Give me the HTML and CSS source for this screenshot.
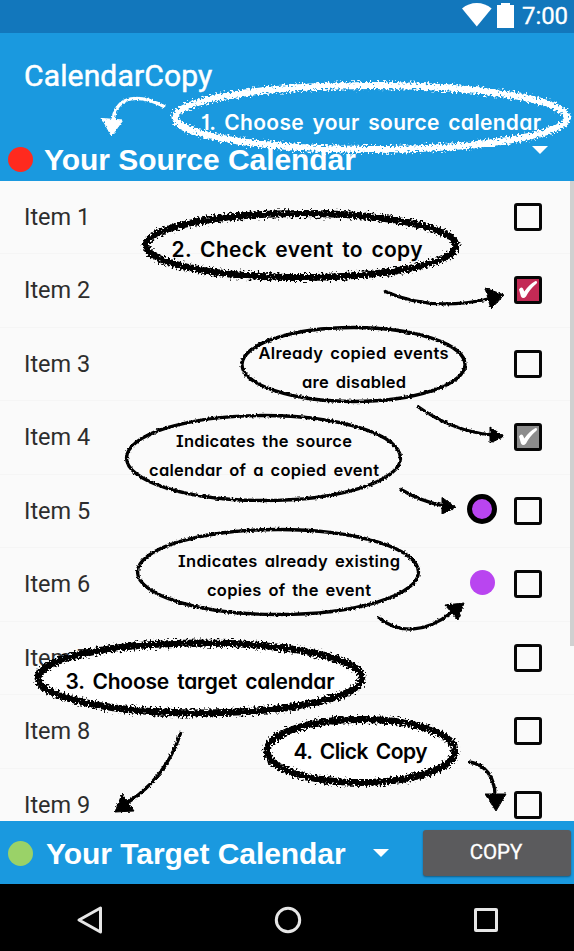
FILE: index.html
```html
<!DOCTYPE html>
<html lang="en">
<head>
<meta charset="utf-8">
<title>CalendarCopy</title>
<link rel="stylesheet" href="styles.css">
</head>
<body>
<div class="screen">
  <div class="status">
    <svg class="wifi" width="30" height="24" viewBox="0 0 30 24"><path d="M0 5.500Q6.500 0 14.800 0T29.600 5.500L14.800 23.500Z"/></svg>
    <svg class="battery" width="17" height="25" viewBox="0 0 17 25"><path d="M4 0h9v2h4v23H0V2h4z"/></svg>
    <span class="clock">7:00</span>
  </div>
  <header class="header">
    <h1 class="title">CalendarCopy</h1>
    <div class="source">
      <span class="dot red"></span>
      <span class="calendar">Your Source Calendar</span>
      <svg class="caret" width="16" height="8" viewBox="0 0 16 8"><path d="M0 0h16L8 8z"/></svg>
    </div>
  </header>
  <main class="list">
    <div class="row"><span class="name">Item 1</span><span class="box"></span></div>
    <div class="row"><span class="name">Item 2</span><span class="box checked"><svg width="21" height="19" viewBox="0 0 21 19"><path d="M1 8.500Q3 5 5 7.500L6.300 10.500Q11 3.500 17.500 0Q20 0 18.600 2.500Q11.500 8.500 8 15.500Q5 18.500 3 15.500Z"/></svg></span></div>
    <div class="row"><span class="name">Item 3</span><span class="box"></span></div>
    <div class="row"><span class="name">Item 4</span><span class="box disabled"><svg width="21" height="19" viewBox="0 0 21 19"><path d="M1 8.500Q3 5 5 7.500L6.300 10.500Q11 3.500 17.500 0Q20 0 18.600 2.500Q11.500 8.500 8 15.500Q5 18.500 3 15.500Z"/></svg></span></div>
    <div class="row"><span class="name">Item 5</span><span class="mark ring"></span><span class="box"></span></div>
    <div class="row"><span class="name">Item 6</span><span class="mark"></span><span class="box"></span></div>
    <div class="row"><span class="name">Item 7</span><span class="box"></span></div>
    <div class="row"><span class="name">Item 8</span><span class="box"></span></div>
    <div class="row"><span class="name">Item 9</span><span class="box"></span></div>
    <div class="scrollbar"></div>
  </main>
  <footer class="target">
    <span class="dot green"></span>
    <span class="calendar">Your Target Calendar</span>
    <svg class="caret" width="16" height="8" viewBox="0 0 16 8"><path d="M0 0h16L8 8z"/></svg>
    <button class="copy">COPY</button>
  </footer>
  <nav class="nav">
    <svg width="28" height="30" viewBox="0 0 28 30"><path d="M24.500 3v24L3 15z"/></svg>
    <svg width="28" height="30" viewBox="0 0 28 30"><circle cx="14" cy="15" r="11.700"/></svg>
    <svg width="28" height="30" viewBox="0 0 28 30"><rect x="3.500" y="4.500" width="21" height="21" rx="0.500"/></svg>
  </nav>

  <svg class="notes" width="574" height="951" viewBox="0 0 574 951">
    <defs>
      <filter id="chalk" filterUnits="userSpaceOnUse" x="0" y="0" width="574" height="951" color-interpolation-filters="sRGB">
        <feTurbulence type="fractalNoise" baseFrequency="0.5" numOctaves="3" seed="4" result="n"/>
        <feDisplacementMap in="SourceGraphic" in2="n" scale="10" xChannelSelector="R" yChannelSelector="G"/>
      </filter>
      <filter id="pen" filterUnits="userSpaceOnUse" x="0" y="0" width="574" height="951" color-interpolation-filters="sRGB">
        <feTurbulence type="fractalNoise" baseFrequency="0.5" numOctaves="2" seed="7" result="n"/>
        <feDisplacementMap in="SourceGraphic" in2="n" scale="3.200" xChannelSelector="R" yChannelSelector="G"/>
      </filter>
    </defs>
    <g class="fill">
      <ellipse cx="200" cy="678" rx="160" ry="33.500"/>
      <ellipse cx="361" cy="751" rx="93" ry="31"/>
    </g>
    <g class="thick" filter="url(#chalk)">
      <ellipse class="white" cx="371" cy="117.500" rx="196" ry="32"/>
      <ellipse cx="301" cy="245.500" rx="155" ry="32"/>
      <ellipse cx="200" cy="678" rx="162" ry="35"/>
      <ellipse cx="361" cy="751" rx="94" ry="31.500"/>
    </g>
    <g class="thin" filter="url(#pen)">
      <ellipse cx="353.500" cy="364.500" rx="111.500" ry="37"/>
      <ellipse cx="263.500" cy="458" rx="137" ry="42.500"/>
      <ellipse cx="278" cy="572" rx="140.500" ry="42.500"/>
      <path class="white" d="M165 107C140 94 117 94 113 120"/>
      <path d="M384 291Q430 312 488 299"/>
      <path d="M417 406Q452 431 492 435"/>
      <path d="M400 489Q420 501 444 506"/>
      <path d="M378 617C398 634 425 634 452 612"/>
      <path d="M181 732Q166 778 127 803"/>
      <path d="M469 762C485 764 495 777 495 796"/>
    </g>
    <g class="heads" filter="url(#pen)">
      <path class="white" d="M102 118.500L123 120L111.500 136Z"/>
      <path d="M485 288L504 295L491 309Z"/>
      <path d="M490 427L504 436.500L490 443Z"/>
      <path d="M442 497.500L456 507.500L442 514Z"/>
      <path d="M445 605L464 603L458 620Z"/>
      <path d="M122 794L134 811L115 812Z"/>
      <path d="M485 794L506 794L496 811Z"/>
    </g>
    <g class="big">
      <text class="pale" x="201" y="129.500" textLength="340">1. Choose your source calendar</text>
      <text x="171.500" y="256.500" textLength="251">2. Check event to copy</text>
      <text x="65.500" y="688.500" textLength="269">3. Choose target calendar</text>
      <text x="293.500" y="758.500" textLength="134">4. Click Copy</text>
    </g>
    <g class="small">
      <text x="258.500" y="359" textLength="190">Already copied events</text>
      <text x="302" y="388" textLength="104">are disabled</text>
      <text x="176" y="447" textLength="176">Indicates the source</text>
      <text x="149" y="476" textLength="230">calendar of a copied event</text>
      <text x="178" y="567" textLength="222">Indicates already existing</text>
      <text x="207" y="596" textLength="164">copies of the event</text>
    </g>
  </svg>
</div>
</body>
</html>
```
FILE: styles.css
```css
* { box-sizing: border-box; }
body { margin: 0; background: #000; }
.screen {
  position: relative;
  width: 574px;
  height: 951px;
  overflow: hidden;
  display: flex;
  flex-direction: column;
  font-family: Roboto, sans-serif;
}
.status {
  height: 33px;
  flex: none;
  background: #1277bc;
  display: flex;
  justify-content: flex-end;
  padding: 3px 6px 0 0;
}
.status svg { fill: #fff; }
.wifi { margin-right: 5px; }
.battery { margin-right: 8px; }
.clock { color: #fff; font-size: 24px; line-height: 27px; letter-spacing: -0.1px; -webkit-text-stroke: 0.3px #fff; }
.header {
  height: 147.500px;
  flex: none;
  background: #1a99df;
  display: flex;
  flex-direction: column;
}
.title {
  margin: 25px 0 0 24px;
  font-size: 30px;
  font-weight: 400;
  line-height: 36px;
  letter-spacing: 0.150px;
  -webkit-text-stroke: 0.5px #fff;
  color: #fff;
}
.source {
  display: flex;
  align-items: center;
  height: 40px;
  margin-top: 45px;
  padding: 0 26px 0 8px;
}
.source .caret { margin: -18px 0 0 auto; }
.dot { width: 25px; height: 25px; border-radius: 50%; flex: none; }
.red { background: #ff2a1e; }
.green { background: #9ad268; }
.calendar {
  font: bold 30px/36px "Liberation Sans", Arial, sans-serif;
  letter-spacing: -0.05px;
  color: #fff;
  margin: 2px 0 0 11px;
  white-space: nowrap;
}
.caret { fill: #fff; flex: none; }
.list {
  position: relative;
  height: 640.500px;
  flex: none;
  overflow: hidden;
  background: #fafafa;
}
.row {
  height: 73.500px;
  display: flex;
  align-items: center;
  padding: 0 32px 0 24px;
  border-bottom: 1px solid #f5f5f5;
}
.name { flex: 1; font-size: 23.500px; color: #2d2d2d; }
.box {
  width: 28px;
  height: 28px;
  border: 3px solid #060606;
  border-radius: 3px;
  display: flex;
  align-items: center;
  justify-content: center;
}
.box svg { flex: none; fill: #fff; }
.checked { background: #c32a55; }
.disabled { background: #8c8c8c; }
.mark {
  width: 25px;
  height: 25px;
  border-radius: 50%;
  background: #b945f0;
  margin: -4px 19px 0 0;
}
.ring { width: 30px; height: 30px; border: 5px solid #000; margin-right: 17px; }
.scrollbar {
  position: absolute;
  top: 0;
  right: 0;
  width: 4px;
  height: 465px;
  background: #d0d0d0;
}
.target {
  height: 63px;
  flex: none;
  display: flex;
  align-items: center;
  padding: 0 3px 0 8px;
  background: #1a99df;
}
.target .dot { margin-top: 2px; }
.target .calendar { margin-left: 13px; }
.target .caret { margin-left: 27px; }
.copy {
  width: 148px;
  height: 46px;
  margin: 0 0 0 auto;
  padding: 0 2px 1px 0;
  border: 0;
  border-radius: 3px;
  background: #5b5b5d;
  box-shadow: 0 1px 2px rgba(0, 0, 0, 0.4);
  color: #fff;
  font: 20.500px Roboto, sans-serif;
  -webkit-text-stroke: 0.3px #fff;
}
.nav {
  height: 67px;
  flex: none;
  display: flex;
  align-items: center;
  justify-content: space-between;
  padding: 5px 74px 0 76px;
  background: #000;
}
.nav svg { fill: none; stroke: #e6e6e6; stroke-width: 3; stroke-linejoin: round; }
.notes { position: absolute; top: 0; left: 0; pointer-events: none; }
.fill { fill: #fff; }
.thick { fill: none; stroke: #000; stroke-width: 7; }
.thin { fill: none; stroke: #000; stroke-width: 3.300; }
.heads { fill: #000; stroke: #000; stroke-width: 1; stroke-linejoin: round; }
.thin .white, .thick .white { stroke: #fff; }
.heads .white { fill: #fff; stroke: #fff; }
.big, .small {
  font-family: "Chalkboard SE", Inter, sans-serif;
  font-feature-settings: "cv11", "cv08", "cv01", "kern";
  font-weight: 600;
  fill: #000;
}
.big { font-size: 21px; word-spacing: 3px; }
.small { font-size: 16.500px; word-spacing: 2.500px; }
.pale { fill: #fff; }
```
